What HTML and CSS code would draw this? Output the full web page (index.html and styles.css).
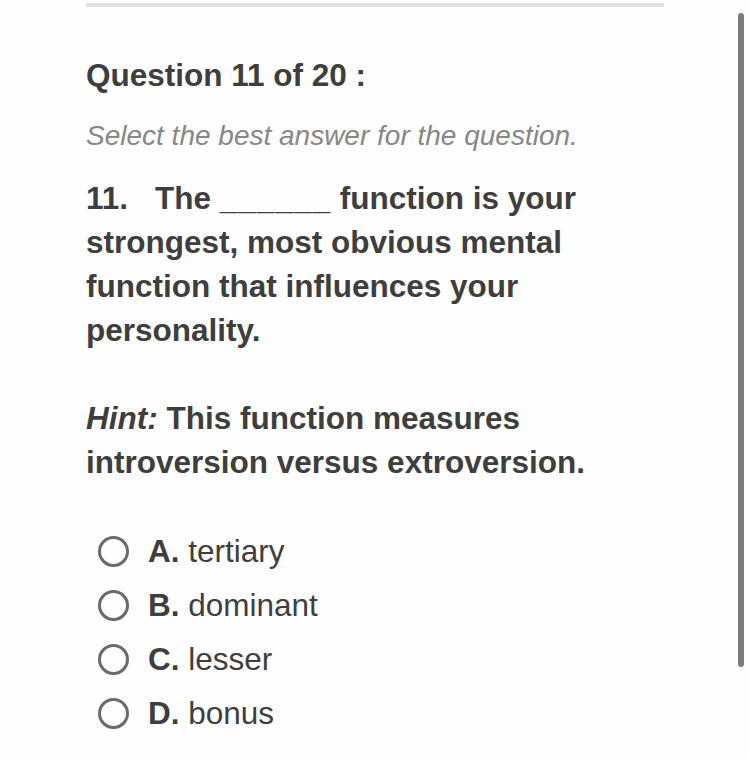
FILE: index.html
```html
<!DOCTYPE html>
<html>
<head>
<meta charset="utf-8">
<link rel="stylesheet" href="styles.css">
</head>
<body>
<div class="page">
  <div class="topbar"></div>
  <h1 class="heading">Question 11 of 20 :</h1>
  <p class="instr">Select the best answer for the question.</p>
  <div class="question">
    <p><span class="num">11.</span>The <span class="blank">______</span> function is your strongest, most obvious mental function that influences your personality.</p>
    <p class="hint"><em>Hint:</em> This function measures introversion versus extroversion.</p>
  </div>
  <ul class="options">
    <li class="option"><span class="radio"></span><span class="label"><b>A.</b> tertiary</span></li>
    <li class="option"><span class="radio"></span><span class="label"><b>B.</b> dominant</span></li>
    <li class="option"><span class="radio"></span><span class="label"><b>C.</b> lesser</span></li>
    <li class="option"><span class="radio"></span><span class="label"><b>D.</b> bonus</span></li>
  </ul>
</div>
<div class="scrollbar"></div>
</body>
</html>
```
FILE: styles.css
```css
html, body {
  margin: 0;
  padding: 0;
  background: #fefefe;
}
body {
  font-family: "Liberation Sans", Arial, sans-serif;
  color: #3e3e3e;
  height: 759px;
  overflow: hidden;
}
.page {
  margin-left: 86px;
  width: 578px;
  padding-top: 3px;
}
.topbar {
  height: 4px;
  background: #e1e1e1;
}
.heading {
  margin: 46px 0 0 0;
  font-size: 31.5px;
  line-height: 44px;
  font-weight: bold;
}
.instr {
  margin: 19px 0 0 0;
  font-size: 28px;
  line-height: 40px;
  font-style: italic;
  color: #878787;
}
.question {
  margin-top: 20px;
  font-size: 31.5px;
  line-height: 44px;
  font-weight: bold;
}
.question p {
  margin: 0;
}
.num {
  display: inline-block;
  margin-right: 27px;
}
.blank {
  letter-spacing: 1px;
}
.question .hint {
  margin-top: 44px;
}
.options {
  list-style: none;
  margin: 40px 0 0 12px;
  padding: 0;
  display: flex;
  flex-direction: column;
}
.option {
  display: flex;
  align-items: center;
  gap: 19px;
  height: 54px;
  font-size: 31.5px;
}
.radio {
  width: 25px;
  height: 25px;
  border: 3px solid #6a6a6a;
  border-radius: 50%;
  flex: none;
}
.label b {
  font-weight: bold;
}
.scrollbar {
  position: absolute;
  left: 738px;
  top: 13px;
  width: 6px;
  height: 654px;
  border-radius: 3px;
  background: #7b7b7b;
}
```
